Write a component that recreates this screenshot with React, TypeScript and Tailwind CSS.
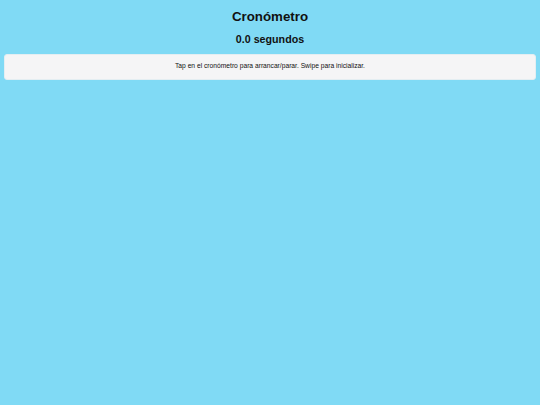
export default function App() {
  return (
    <div
      className="min-h-screen bg-[#80daf5] text-[#111] px-[4px] pt-[9px]"
      style={{ fontFamily: '"Liberation Sans", Arial, sans-serif' }}
    >
      <h1 className="text-center font-bold text-[13.3px] leading-[16px]">Cronómetro</h1>
      <h2 className="mt-[7px] text-center font-bold text-[10.7px] leading-[14px]">0.0 segundos</h2>
      <div className="mt-[8px] h-[26px] pt-[7px] rounded-[3px] border border-[#e4eef2] bg-[#f5f5f6]">
        <p className="text-center text-[6.7px] leading-[8px]">
          Tap en el cronómetro para arrancar/parar. Swipe para inicializar.
        </p>
      </div>
    </div>
  );
}
